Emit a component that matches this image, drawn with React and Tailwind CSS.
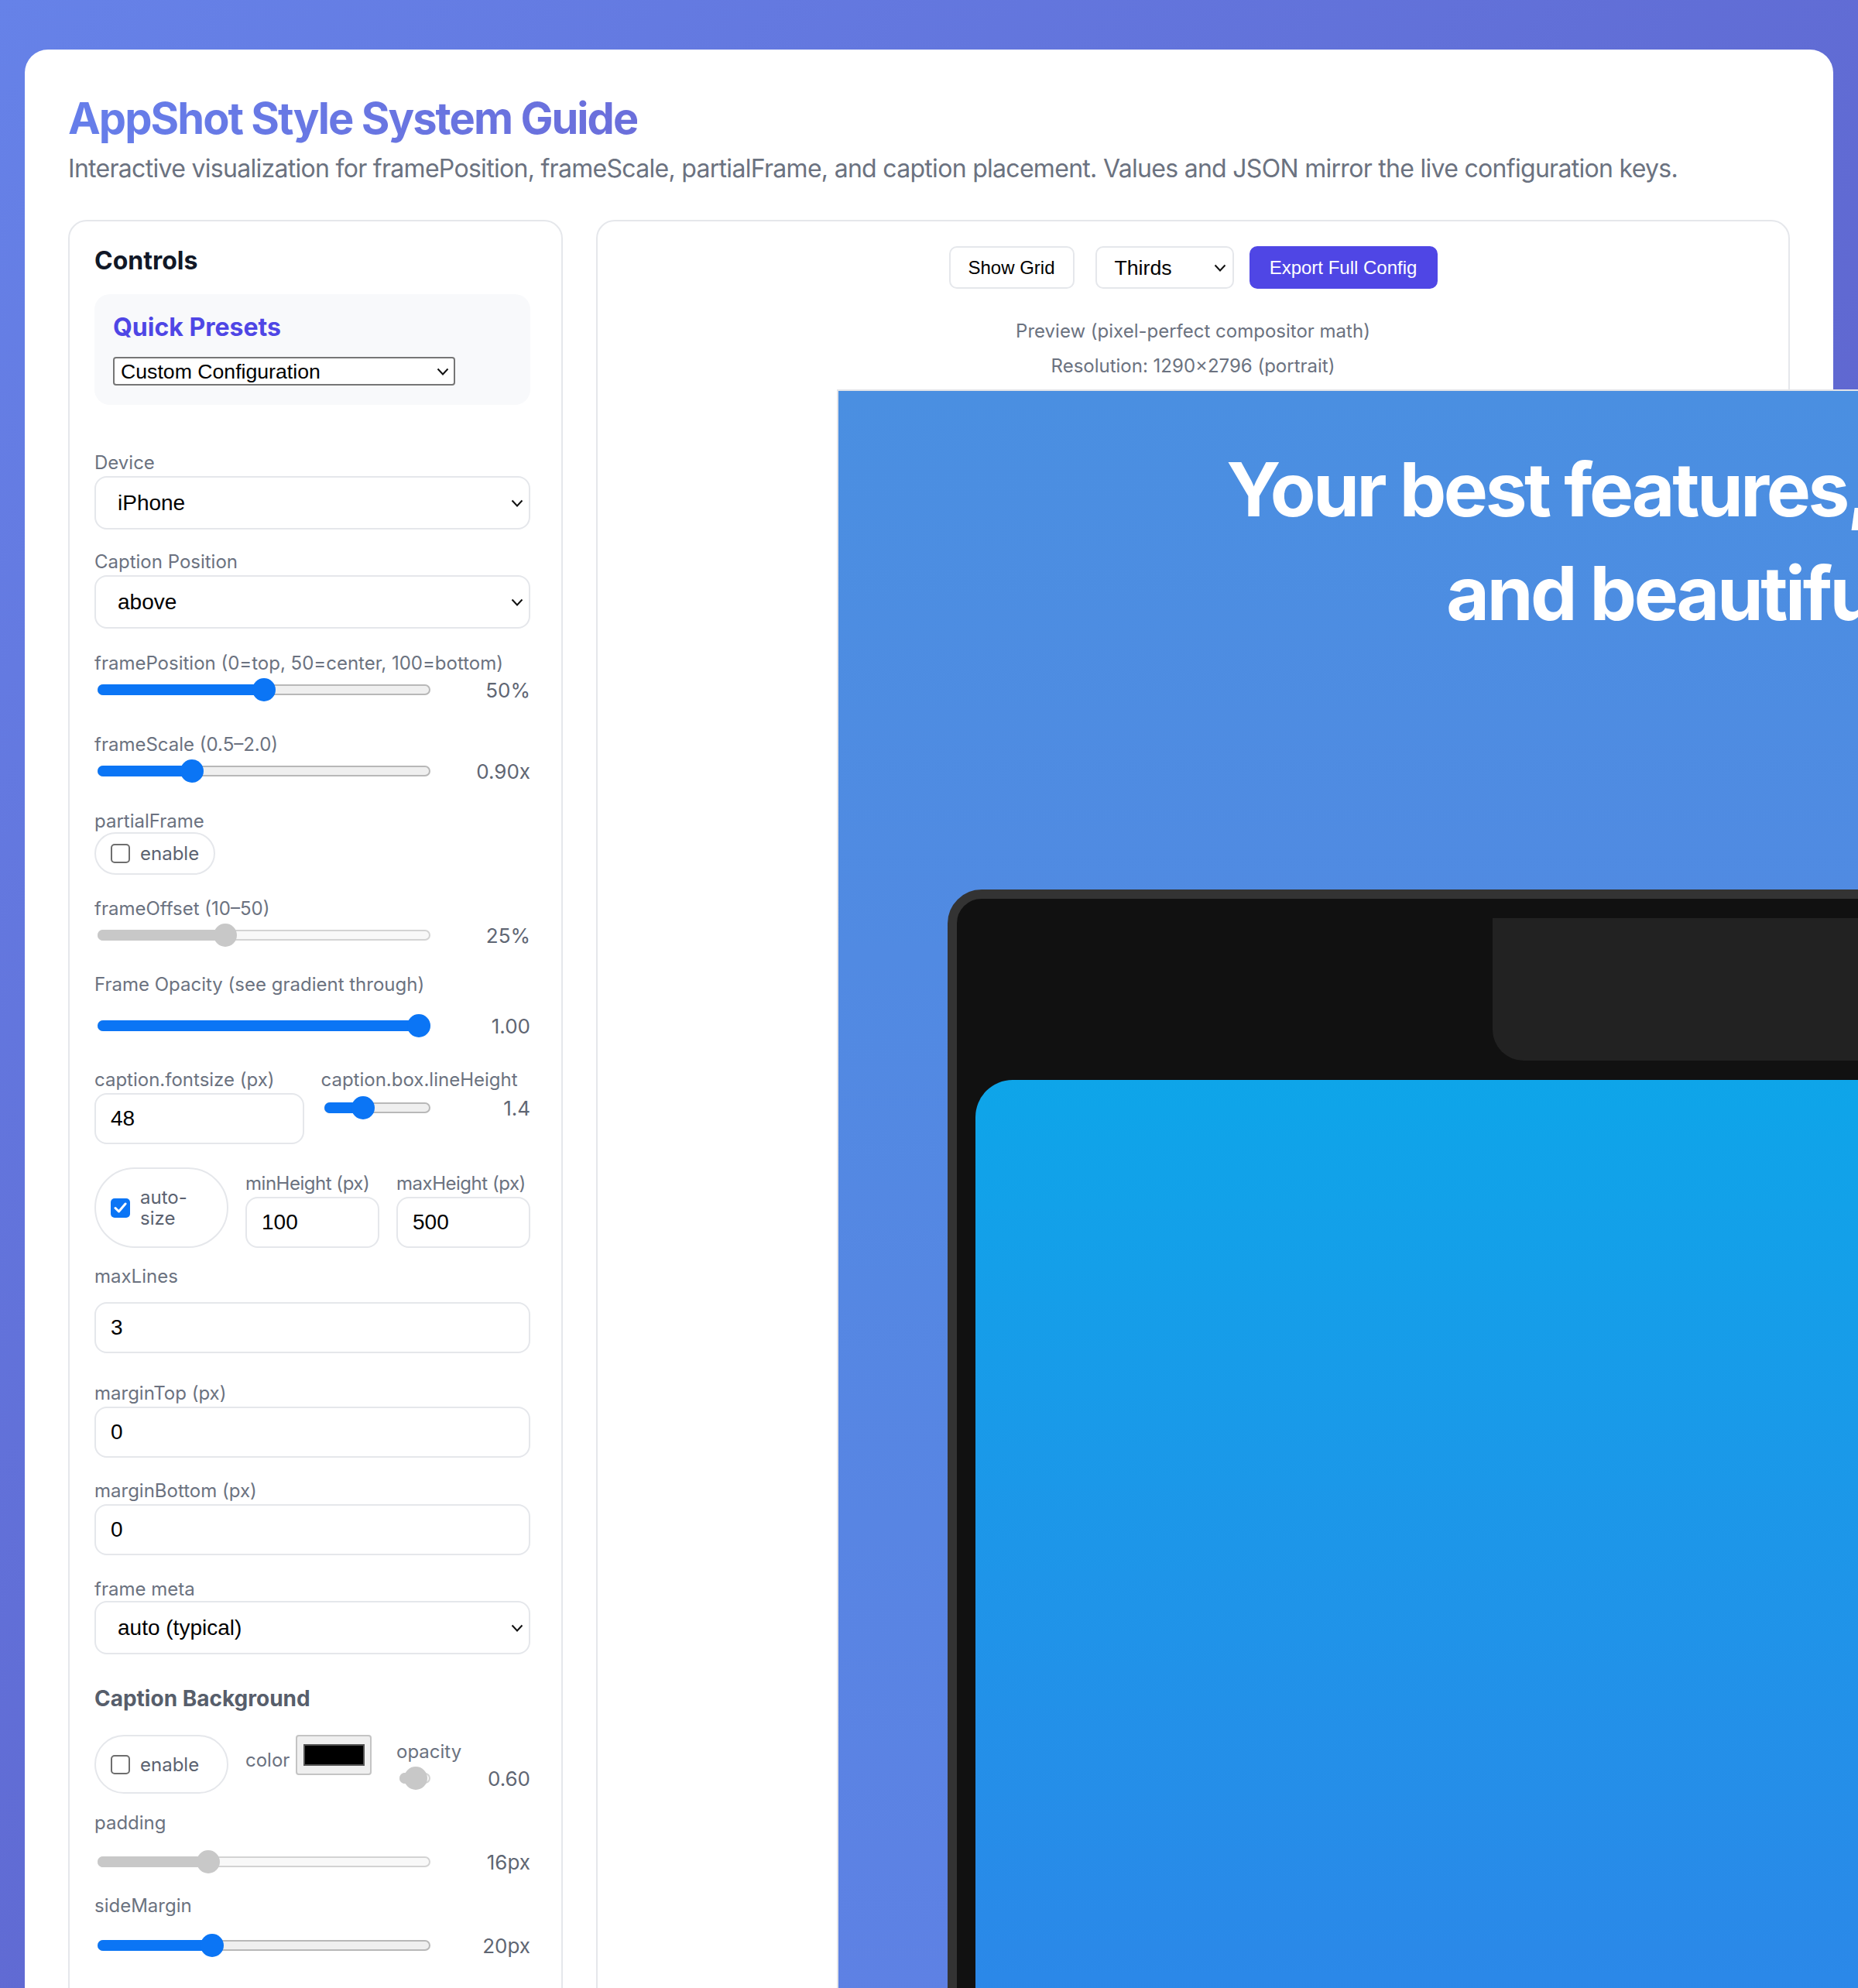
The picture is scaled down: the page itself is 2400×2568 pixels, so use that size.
import React from "react";

const UI = "font-['Inter',sans-serif]";
const SYS = "font-['Liberation_Sans',Arial,sans-serif]";

const Chevron = ({ className = "" }) => (
  <svg width="16" height="10" viewBox="0 0 16 10" fill="none" className={className}>
    <path d="M1.5 1.5 8 8.5 14.5 1.5" stroke="#111" strokeWidth="2" />
  </svg>
);

const Label = ({ children, className = "" }) => (
  <div className={`whitespace-nowrap text-[24px] leading-[34px] text-[#6b7280] ${className}`}>{children}</div>
);

const Select = ({ value, className = "" }) => (
  <div
    className={`flex h-[69px] items-center justify-between rounded-[16px] border-2 border-[#e5e7eb] bg-white pl-[28px] pr-[7px] ${className}`}
  >
    <span className={`${SYS} text-[28px] text-black`}>{value}</span>
    <Chevron />
  </div>
);

const Field = ({ value, className = "" }) => (
  <input
    readOnly
    value={value}
    className={`${SYS} h-[66px] w-full rounded-[16px] border-2 border-[#e5e7eb] bg-white px-[19px] text-[28px] text-black outline-none ${className}`}
  />
);

const Range = ({ pct, value, disabled = false, className = "" }) => {
  const track = disabled ? "border-[#d3d3d3] bg-[#f8f8f8]" : "border-[#b8b8b8] bg-[#efefef]";
  const fill = disabled ? "bg-[#c8c8c8]" : "bg-[#0b75f5]";
  return (
    <div className={`flex h-[34px] items-center ${className}`}>
      <div className="relative mx-[4px] h-[14px] flex-1">
        <div className={`absolute inset-0 rounded-full border-2 ${track}`} />
        <div
          className={`absolute bottom-0 left-0 top-0 rounded-full ${fill}`}
          style={{ width: `calc(15px + ${pct} * (100% - 30px))` }}
        />
        <div
          className={`absolute top-1/2 h-[30px] w-[30px] -translate-y-1/2 rounded-full ${fill}`}
          style={{ left: `calc(${pct} * (100% - 30px))` }}
        />
      </div>
      <span className="w-[125px] text-right text-[26px] text-[#5f6673]">{value}</span>
    </div>
  );
};

const Check = ({ checked }) =>
  checked ? (
    <span className="flex h-[25px] w-[25px] shrink-0 items-center justify-center rounded-[5px] bg-[#0b75f5]">
      <svg width="17" height="14" viewBox="0 0 17 14" fill="none">
        <path d="M2 7.5 6.5 12 15 2" stroke="white" strokeWidth="3" strokeLinecap="round" strokeLinejoin="round" />
      </svg>
    </span>
  ) : (
    <span className="h-[25px] w-[25px] shrink-0 rounded-[5px] border-2 border-[#6e6e6e] bg-white" />
  );

const Pill = ({ checked, text, className = "" }) => (
  <div
    className={`flex items-center gap-[13px] rounded-full border-2 border-[#e5e7eb] px-[19px] py-[12px] ${className}`}
  >
    <Check checked={checked} />
    <span className="text-[24px] leading-[27px] text-[#5b6270]">{text}</span>
  </div>
);

const Controls = () => (
  <aside className="flex min-h-[2400px] flex-col rounded-[24px] border-2 border-[#e5e7eb] pb-8 pl-8 pr-10 pt-8">
    <h2 className="text-[32px] font-bold leading-[38px] text-[#111827]">Controls</h2>

    <div className="mt-6 rounded-[20px] bg-[#f8f9fb] p-6 pb-[25px]">
      <h3 className="text-[32px] font-bold leading-[38px] text-[#4f46e5]">Quick Presets</h3>
      <div className="mt-[19px] flex h-[37px] w-[442px] items-center justify-between rounded-[4px] border-2 border-[#767676] bg-white pl-[8px] pr-[6px]">
        <span className={`${SYS} text-[26.67px] text-black`}>Custom Configuration</span>
        <Chevron />
      </div>
    </div>

    <Label className="mt-[58px]">Device</Label>
    <Select value="iPhone" />

    <Label className="mt-[25px]">Caption Position</Label>
    <Select value="above" />

    <Label className="mt-[28px]">framePosition (0=top, 50=center, 100=bottom)</Label>
    <Range pct={0.5} value="50%" />

    <Label className="mt-[37px]">frameScale (0.5–2.0)</Label>
    <Range pct={0.2667} value="0.90x" />

    <Label className="mt-[31px]">partialFrame</Label>
    <div className="-mt-[3px] flex">
      <Pill text="enable" />
    </div>

    <Label className="mt-[27px]">frameOffset (10–50)</Label>
    <Range pct={0.375} value="25%" disabled />

    <Label className="mt-[30px]">Frame Opacity (see gradient through)</Label>
    <Range pct={1} value="1.00" className="mt-[19px]" />

    <div className="mt-[36px] grid grid-cols-2 gap-[22px]">
      <div>
        <Label>caption.fontsize (px)</Label>
        <Field value="48" />
      </div>
      <div>
        <Label>caption.box.lineHeight</Label>
        <Range pct={0.3333} value="1.4" className="h-[38px]" />
      </div>
    </div>

    <div className="mt-[30px] grid grid-cols-3 items-end gap-[22px]">
      <Pill checked text="auto-size" className="h-[104px]" />
      <div>
        <Label className="tracking-[-0.02em]">minHeight (px)</Label>
        <Field value="100" className="text-[#333]" />
      </div>
      <div>
        <Label className="tracking-[-0.02em]">maxHeight (px)</Label>
        <Field value="500" className="text-[#333]" />
      </div>
    </div>

    <Label className="mt-[20px]">maxLines</Label>
    <Field value="3" className="mt-[16px]" />

    <Label className="mt-[35px]">marginTop (px)</Label>
    <Field value="0" />

    <Label className="mt-[26px]">marginBottom (px)</Label>
    <Field value="0" />

    <Label className="mt-[27px]">frame meta</Label>
    <Select value="auto (typical)" className="-mt-[2px]" />

    <h4 className="mt-[40px] text-[28px] font-bold leading-[34px] text-[#575e6b]">Caption Background</h4>

    <div className="mt-[30px] grid grid-cols-3 gap-[22px]">
      <Pill text="enable" className="h-[76px]" />
      <div className="flex items-start gap-[8px]">
        <span className="mt-[16px] text-[24px] leading-[34px] text-[#6b7280]">color</span>
        <div className="flex h-[52px] w-[98px] items-center justify-center rounded-[4px] border-2 border-[#c4c4c4] bg-[#efefef]">
          <div className="h-[28px] w-[79px] border-2 border-[#555] bg-black" />
        </div>
      </div>
      <div className="pt-[5px]">
        <Label>opacity</Label>
        <Range pct={0.6} value="0.60" disabled />
      </div>
    </div>

    <Label className="mt-[21px]">padding</Label>
    <Range pct={0.32} value="16px" disabled className="mt-[16px]" />

    <Label className="mt-[23px]">sideMargin</Label>
    <Range pct={0.3333} value="20px" className="mt-[17px]" />
  </aside>
);

const Preview = () => (
  <section className="flex min-w-0 flex-col rounded-[24px] border-2 border-[#e5e7eb] pt-8">
    <div className="flex items-center justify-center">
      <button className={`${SYS} h-[55px] w-[162px] rounded-[10px] border-2 border-[#e5e7eb] bg-white text-[24px] text-black`}>
        Show Grid
      </button>
      <div className="ml-[27px] flex h-[55px] w-[179px] items-center justify-between rounded-[10px] border-2 border-[#e5e7eb] bg-white pl-[23px] pr-[8px]">
        <span className={`${SYS} text-[26.67px] text-black`}>Thirds</span>
        <Chevron />
      </div>
      <button className={`${SYS} ml-[20px] h-[55px] w-[243px] rounded-[10px] bg-[#4f46e5] text-[24px] text-white`}>
        Export Full Config
      </button>
    </div>

    <div className="mt-[32px] text-center text-[24px] leading-[45px] text-[#6b7280]">
      <div>Preview (pixel-perfect compositor math)</div>
      <div>Resolution: 1290×2796 (portrait)</div>
    </div>

    <div className="ml-[309px] mt-[8px] h-[2200px] w-[2580px] shrink-0 border-2 border-[#e3e4e8] bg-[linear-gradient(180deg,#4a8fe1_0%,#5f80e4_100%)]">
      <div className="pl-[12px] pt-[60px] text-center text-[96px] font-bold leading-[134.4px] tracking-[-0.035em] text-white">
        <div className="whitespace-nowrap">Your best features, shown so clearly</div>
        <div className="whitespace-nowrap">and beautifully framed.</div>
      </div>

      <div className="mx-[141px] mt-[315px] flex flex-col rounded-[44px] border-[12px] border-[#333] bg-[#111] px-[24px] pt-[25px]">
        <div className="h-[184px] w-[886px] shrink-0 self-center rounded-b-[40px] bg-[#222]" />
        <div className="mt-[25px] h-[1400px] shrink-0 rounded-[48px] bg-[linear-gradient(180deg,#0ea5e9_0%,#3182e8_100%)]" />
      </div>
    </div>
  </section>
);

export default function App() {
  return (
    <div className={`${UI} h-[2568px] overflow-hidden bg-[linear-gradient(135deg,#6682e8_0%,#5b55c0_100%)] px-8 pt-16`}>
      <div className="min-h-[2600px] rounded-t-[30px] bg-white px-14 pt-14">
        <h1 className="inline-block bg-[linear-gradient(90deg,#667eea,#6b6fdb)] bg-clip-text text-[56px] font-bold leading-[67px] tracking-[-0.035em] text-transparent">
          AppShot Style System Guide
        </h1>
        <p className="mt-[7px] text-[32px] leading-[48px] tracking-[-0.022em] text-[#6b7280]">
          Interactive visualization for framePosition, frameScale, partialFrame, and caption placement. Values and
          JSON mirror the live configuration keys.
        </p>

        <div className="mt-[42px] grid grid-cols-[639px_1fr] gap-[43px]">
          <Controls />
          <Preview />
        </div>
      </div>
    </div>
  );
}
